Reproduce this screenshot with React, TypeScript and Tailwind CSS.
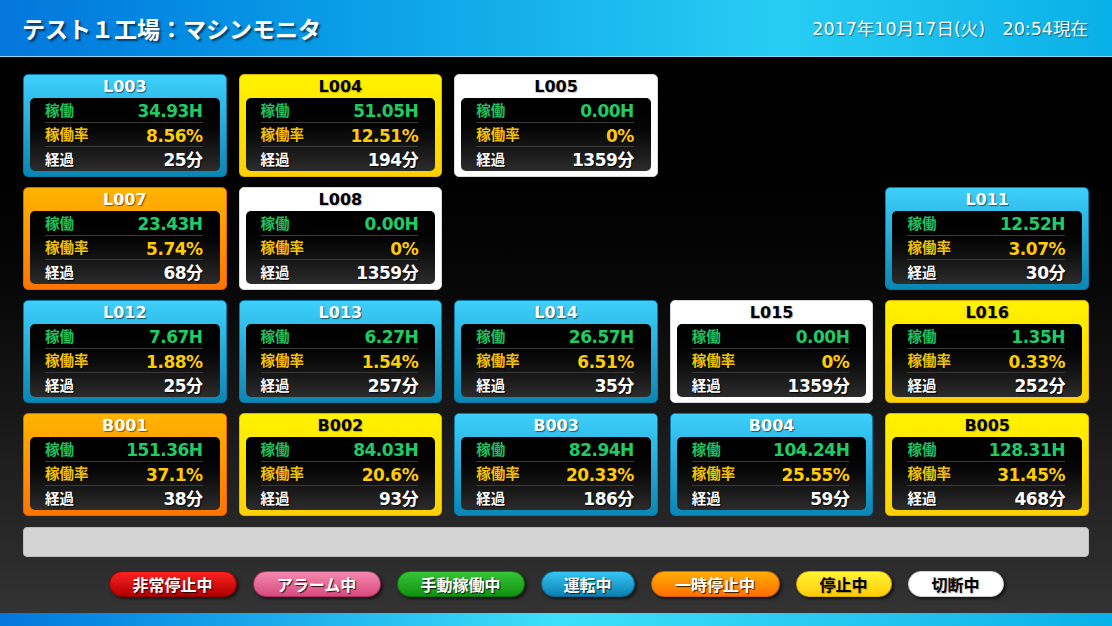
import React from 'react';

type Status = 'blue' | 'yellow' | 'orange' | 'white';

interface Machine {
  name: string;
  status: Status;
  hours: string;
  rate: string;
  elapsed: string;
}

const cardStyles: Record<Status, { box: string; title: string }> = {
  blue: {
    box: 'bg-gradient-to-b from-[#3dd0fb] to-[#0886b4] border-[#0a7aa6]',
    title: 'text-white [text-shadow:1px_1px_1px_rgba(0,0,0,0.55)]',
  },
  yellow: {
    box: 'bg-gradient-to-b from-[#fff200] to-[#ffd000] border-[#e0b400]',
    title: 'text-black [text-shadow:1px_1px_1px_rgba(0,0,0,0.25)]',
  },
  orange: {
    box: 'bg-gradient-to-b from-[#ffb400] to-[#ff7400] border-[#e06400]',
    title: 'text-white [text-shadow:1px_1px_1px_rgba(0,0,0,0.5)]',
  },
  white: {
    box: 'bg-white border-[#d8d8d8]',
    title: 'text-black [text-shadow:1px_1px_1px_rgba(0,0,0,0.25)]',
  },
};

// null = empty slot in the grid
const machines: (Machine | null)[] = [
  { name: 'L003', status: 'blue', hours: '34.93H', rate: '8.56%', elapsed: '25分' },
  { name: 'L004', status: 'yellow', hours: '51.05H', rate: '12.51%', elapsed: '194分' },
  { name: 'L005', status: 'white', hours: '0.00H', rate: '0%', elapsed: '1359分' },
  null,
  null,
  { name: 'L007', status: 'orange', hours: '23.43H', rate: '5.74%', elapsed: '68分' },
  { name: 'L008', status: 'white', hours: '0.00H', rate: '0%', elapsed: '1359分' },
  null,
  null,
  { name: 'L011', status: 'blue', hours: '12.52H', rate: '3.07%', elapsed: '30分' },
  { name: 'L012', status: 'blue', hours: '7.67H', rate: '1.88%', elapsed: '25分' },
  { name: 'L013', status: 'blue', hours: '6.27H', rate: '1.54%', elapsed: '257分' },
  { name: 'L014', status: 'blue', hours: '26.57H', rate: '6.51%', elapsed: '35分' },
  { name: 'L015', status: 'white', hours: '0.00H', rate: '0%', elapsed: '1359分' },
  { name: 'L016', status: 'yellow', hours: '1.35H', rate: '0.33%', elapsed: '252分' },
  { name: 'B001', status: 'orange', hours: '151.36H', rate: '37.1%', elapsed: '38分' },
  { name: 'B002', status: 'yellow', hours: '84.03H', rate: '20.6%', elapsed: '93分' },
  { name: 'B003', status: 'blue', hours: '82.94H', rate: '20.33%', elapsed: '186分' },
  { name: 'B004', status: 'blue', hours: '104.24H', rate: '25.55%', elapsed: '59分' },
  { name: 'B005', status: 'yellow', hours: '128.31H', rate: '31.45%', elapsed: '468分' },
];

const legend = [
  { label: '非常停止中', cls: 'w-[128px] bg-gradient-to-b from-[#ff2020] to-[#b00000] border-[#8a0000] text-white' },
  { label: 'アラーム中', cls: 'w-[128px] bg-gradient-to-b from-[#f488b0] to-[#d84a7c] border-[#b03060] text-white' },
  { label: '手動稼働中', cls: 'w-[128px] bg-gradient-to-b from-[#36c436] to-[#0f920f] border-[#0b740b] text-white' },
  { label: '運転中', cls: 'w-[94px] bg-gradient-to-b from-[#34c6f4] to-[#0880b0] border-[#066c96] text-white' },
  { label: '一時停止中', cls: 'w-[129px] bg-gradient-to-b from-[#ffac00] to-[#ff6e00] border-[#d85e00] text-white' },
  { label: '停止中', cls: 'w-[96px] bg-gradient-to-b from-[#fff430] to-[#ffcc00] border-[#d8b000] text-black' },
  { label: '切断中', cls: 'w-[96px] bg-white border-[#cfcfcf] text-black' },
];

const jp = '[font-family:"Noto_Sans_CJK_JP",sans-serif]';
const num = '[font-family:"DejaVu_Sans","Noto_Sans_CJK_JP",sans-serif]';
const shadow = '[text-shadow:1px_1px_1px_rgba(0,0,0,0.9)]';

const Card: React.FC<{ m: Machine }> = ({ m }) => {
  const s = cardStyles[m.status];
  const label = `text-[14.5px] leading-none font-bold ${jp} ${shadow}`;
  const value = `text-[17px] leading-none font-bold tracking-[-0.5px] pt-[3px] ${num} ${shadow}`;
  return (
    <div className={`h-[103px] rounded-[5px] border flex flex-col px-[6px] pb-[5px] ${s.box}`}>
      <div className={`h-[23px] shrink-0 flex items-center justify-center text-[16px] font-bold leading-none ${num} ${s.title}`}>
        {m.name}
      </div>
      <div className="flex-1 min-h-0 rounded-[5px] bg-gradient-to-b from-black to-[#2c2c2c] pl-[15px] pr-[17px] flex flex-col">
        <div className="flex-1 min-h-0 flex items-center justify-between border-b border-[#3a3a3a]">
          <span className={`${label} text-[#1fc25e]`}>稼働</span>
          <span className={`${value} text-[#1fcc64]`}>{m.hours}</span>
        </div>
        <div className="flex-1 min-h-0 flex items-center justify-between border-b border-[#3a3a3a]">
          <span className={`${label} text-[#f4c400]`}>稼働率</span>
          <span className={`${value} text-[#ffcc00]`}>{m.rate}</span>
        </div>
        <div className="flex-1 min-h-0 flex items-center justify-between">
          <span className={`${label} text-white`}>経過</span>
          <span className={`${value} text-white`}>{m.elapsed}</span>
        </div>
      </div>
    </div>
  );
};

export default function App() {
  return (
    <div className="w-full h-[626px] flex flex-col overflow-hidden bg-black">
      <header className="h-[57px] shrink-0 flex items-center justify-between pl-[22px] pr-[24px] border-b border-[#8ad8f6] bg-gradient-to-r from-[#0576dc] via-[#27cdf2] via-70% to-[#07b0e8]">
        <h1 className={`text-[23px] font-bold text-white ${jp} [text-shadow:2px_2px_2px_rgba(0,0,0,0.55)]`}>
          テスト１工場：マシンモニタ
        </h1>
        <div className={`text-[17.5px] text-white pt-[2px] ${num} [text-shadow:1px_1px_1px_rgba(0,0,0,0.45)]`}>
          2017年10月17日(火)　20:54現在
        </div>
      </header>

      <main className="flex-1 flex flex-col px-[23px] pt-[17px] bg-gradient-to-b from-black to-[#333333]">
        <div className="grid grid-cols-5 gap-x-3 gap-y-[10px]">
          {machines.map((m, i) => (m ? <Card key={m.name} m={m} /> : <div key={`empty-${i}`} />))}
        </div>

        <div className="mt-[11px] h-[30px] rounded-[4px] bg-[#d4d4d4] border border-[#bdbdbd]" />

        <div className="mt-[14px] flex justify-center gap-4">
          {legend.map(l => (
            <div
              key={l.label}
              className={`h-[26px] rounded-full border flex items-center justify-center text-[16px] font-bold shadow-[2px_2px_3px_rgba(0,0,0,0.6)] ${jp} ${l.cls} ${
                l.cls.includes('text-black')
                  ? '[text-shadow:1px_1px_1px_rgba(0,0,0,0.3)]'
                  : '[text-shadow:1px_1px_1px_rgba(0,0,0,0.8)]'
              }`}
            >
              {l.label}
            </div>
          ))}
        </div>
      </main>

      <footer className="h-[13px] shrink-0 bg-gradient-to-r from-[#0576dc] via-[#3ee0f8] via-50% to-[#06b0e8]" />
    </div>
  );
}
